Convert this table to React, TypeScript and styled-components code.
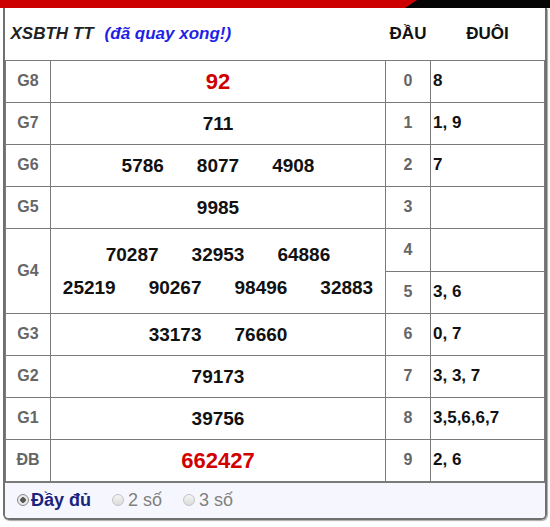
import React from "react";
import styled, { createGlobalStyle } from "styled-components";

const Global = createGlobalStyle`
  html, body { margin: 0; padding: 0; background: #fff; }
  body { font-family: "Liberation Sans", Arial, sans-serif; }
`;

const Page = styled.div`
  width: 550px;
  height: 527px;
  background: #fff;
`;

const TopBar = styled.div`
  height: 8px;
  background: #050505;
  display: flex;
`;

const TopRed = styled.div`
  width: 417px;
  height: 100%;
  background: #cc0000;
  clip-path: polygon(0 0, 100% 0, calc(100% - 12px) 100%, 0 100%);
`;

const Box = styled.div`
  margin: 0 3px;
  border: 2px solid #707070;
  border-top: none;
  border-radius: 0 0 6px 6px;
  box-shadow: 1px 1px 1px #aaa;
  overflow: hidden;
`;

const Table = styled.table`
  width: 100%;
  border-collapse: collapse;
  table-layout: fixed;
`;

const HeadRow = styled.tr`
  height: 52px;
`;

const Row = styled.tr<{ $h?: number }>`
  height: ${(p) => p.$h ?? 42}px;
`;

const Cell = styled.td`
  border: 1px solid #7a7a7a;
  padding: 0;
  vertical-align: middle;
`;

const HeadTitle = styled.th`
  text-align: left;
  padding: 0 0 0 5px;
  border-bottom: 1px solid #7a7a7a;
  font-size: 17px;
  font-style: italic;
  font-weight: bold;
  color: #222;
  white-space: nowrap;
`;

const Status = styled.span`
  color: #1f1fe6;
  margin-left: 11px;
`;

const HeadCol = styled.th`
  border-bottom: 1px solid #7a7a7a;
  font-size: 17px;
  font-weight: bold;
  color: #111;
  text-align: center;
  padding: 0;
`;

const Label = styled(Cell)`
  text-align: center;
  font-size: 16px;
  font-weight: bold;
  color: #666;
`;

const Prize = styled(Cell)`
  text-align: center;
`;

const Numbers = styled.div<{ $red?: boolean }>`
  display: flex;
  justify-content: center;
  gap: 33px;
  font-size: ${(p) => (p.$red ? 22 : 19)}px;
  font-weight: bold;
  color: ${(p) => (p.$red ? "#d00000" : "#111")};
  line-height: 33px;
`;

const Lines = styled.div`
  display: flex;
  flex-direction: column;
  align-items: center;
`;

const Head = styled(Cell)`
  text-align: center;
  font-size: 16px;
  font-weight: bold;
  color: #666;
`;

const Tail = styled(Cell)`
  padding-left: 2px;
  font-size: 17px;
  font-weight: bold;
  color: #111;
`;

const Footer = styled.div`
  height: 35px;
  background: #f6f7fe;
  border-top: 1px solid #7a7a7a;
  display: flex;
  align-items: center;
  padding-left: 12px;
  gap: 21px;
`;

const Option = styled.label<{ $active?: boolean }>`
  display: flex;
  align-items: center;
  gap: ${(p) => (p.$active ? 2 : 4)}px;
  font-size: 18px;
  font-weight: ${(p) => (p.$active ? "bold" : "normal")};
  color: ${(p) => (p.$active ? "#1a237e" : "#808080")};
`;

const Radio = styled.span<{ $checked?: boolean }>`
  width: 12px;
  height: 12px;
  border-radius: 50%;
  box-sizing: border-box;
  border: 1px solid ${(p) => (p.$checked ? "#8a8a8a" : "#c4c4c4")};
  background: ${(p) =>
    p.$checked
      ? "radial-gradient(circle, #555 0 2.5px, #e8e8e8 3px)"
      : "linear-gradient(#f4f4f4, #dcdcdc)"};
`;

type RowData = {
  label: string;
  nums: string[][];
  red?: boolean;
};

const prizes: RowData[] = [
  { label: "G8", nums: [["92"]], red: true },
  { label: "G7", nums: [["711"]] },
  { label: "G6", nums: [["5786", "8077", "4908"]] },
  { label: "G5", nums: [["9985"]] },
  {
    label: "G4",
    nums: [
      ["70287", "32953", "64886"],
      ["25219", "90267", "98496", "32883"],
    ],
  },
  { label: "G3", nums: [["33173", "76660"]] },
  { label: "G2", nums: [["79173"]] },
  { label: "G1", nums: [["39756"]] },
  { label: "ĐB", nums: [["662427"]], red: true },
];

const tails: string[] = ["8", "1, 9", "7", "", "", "3, 6", "0, 7", "3, 3, 7", "3,5,6,6,7", "2, 6"];

export default function App() {
  const rows: React.ReactNode[] = [];
  let d = 0;
  prizes.forEach((p) => {
    if (p.label === "G4") {
      rows.push(
        <Row key="g4a" $h={43}>
          <Label rowSpan={2}>{p.label}</Label>
          <Prize rowSpan={2}>
            <Lines>
              {p.nums.map((line, i) => (
                <Numbers key={i}>
                  {line.map((n) => (
                    <span key={n}>{n}</span>
                  ))}
                </Numbers>
              ))}
            </Lines>
          </Prize>
          <Head>{d}</Head>
          <Tail>{tails[d]}</Tail>
        </Row>
      );
      d++;
      rows.push(
        <Row key="g4b" $h={42}>
          <Head>{d}</Head>
          <Tail>{tails[d]}</Tail>
        </Row>
      );
      d++;
    } else {
      rows.push(
        <Row key={p.label}>
          <Label>{p.label}</Label>
          <Prize>
            <Numbers $red={p.red}>
              {p.nums[0].map((n) => (
                <span key={n}>{n}</span>
              ))}
            </Numbers>
          </Prize>
          <Head>{d}</Head>
          <Tail>{tails[d]}</Tail>
        </Row>
      );
      d++;
    }
  });

  return (
    <Page>
      <Global />
      <TopBar>
        <TopRed />
      </TopBar>
      <Box>
        <Table>
          <colgroup>
            <col style={{ width: 45 }} />
            <col style={{ width: 335 }} />
            <col style={{ width: 45 }} />
            <col />
          </colgroup>
          <thead>
            <HeadRow>
              <HeadTitle colSpan={2}>
                XSBTH TT<Status>(đã quay xong!)</Status>
              </HeadTitle>
              <HeadCol>ĐẦU</HeadCol>
              <HeadCol>ĐUÔI</HeadCol>
            </HeadRow>
          </thead>
          <tbody>{rows}</tbody>
        </Table>
        <Footer>
          <Option $active>
            <Radio $checked />
            Đầy đủ
          </Option>
          <Option>
            <Radio />2 số
          </Option>
          <Option>
            <Radio />3 số
          </Option>
        </Footer>
      </Box>
    </Page>
  );
}
